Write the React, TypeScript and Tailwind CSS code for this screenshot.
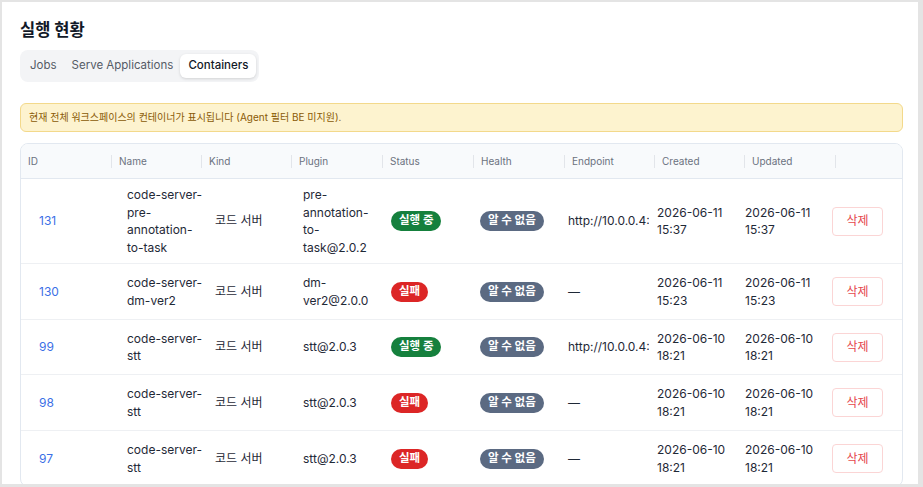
import React from 'react';

type Row = {
  id: number;
  name: string;
  plugin: string;
  status: 'running' | 'failed';
  endpoint: string;
  created: [string, string];
  updated: [string, string];
  height: string;
};

const rows: Row[] = [
  {
    id: 131,
    name: 'code-server-pre-annotation-to-task',
    plugin: 'pre-annotation-to-task@2.0.2',
    status: 'running',
    endpoint: 'http://10.0.0.4:8080',
    created: ['2026-06-11', '15:37'],
    updated: ['2026-06-11', '15:37'],
    height: 'h-[84px]',
  },
  {
    id: 130,
    name: 'code-server-dm-ver2',
    plugin: 'dm-ver2@2.0.0',
    status: 'failed',
    endpoint: '—',
    created: ['2026-06-11', '15:23'],
    updated: ['2026-06-11', '15:23'],
    height: 'h-[56px]',
  },
  {
    id: 99,
    name: 'code-server-stt',
    plugin: 'stt@2.0.3',
    status: 'running',
    endpoint: 'http://10.0.0.4:8081',
    created: ['2026-06-10', '18:21'],
    updated: ['2026-06-10', '18:21'],
    height: 'h-[55px]',
  },
  {
    id: 98,
    name: 'code-server-stt',
    plugin: 'stt@2.0.3',
    status: 'failed',
    endpoint: '—',
    created: ['2026-06-10', '18:21'],
    updated: ['2026-06-10', '18:21'],
    height: 'h-[56px]',
  },
  {
    id: 97,
    name: 'code-server-stt',
    plugin: 'stt@2.0.3',
    status: 'failed',
    endpoint: '—',
    created: ['2026-06-10', '18:21'],
    updated: ['2026-06-10', '18:21'],
    height: 'h-[56px]',
  },
];

const headers = ['ID', 'Name', 'Kind', 'Plugin', 'Status', 'Health', 'Endpoint', 'Created', 'Updated', ''];

const headCols = 'grid grid-cols-[90px_90px_90px_91px_91px_91px_90px_90px_91px_69px]';
const bodyCols = 'grid grid-cols-[10px_88px_88px_88px_88px_89px_88px_89px_88px_87px_80px]';

const StatusBadge: React.FC<{ status: Row['status'] }> = ({ status }) =>
  status === 'running' ? (
    <span className="inline-flex h-[20px] items-center rounded-full bg-[#15803d] px-[8px] text-[11.5px] font-bold text-white">
      실행 중
    </span>
  ) : (
    <span className="inline-flex h-[20px] items-center rounded-full bg-[#dc2626] px-[8px] text-[11.5px] font-bold text-white">
      실패
    </span>
  );

const App: React.FC = () => {
  const font = { fontFamily: 'Inter, "Noto Sans CJK KR", sans-serif' };

  return (
    <div className="h-[487px] w-[923px] overflow-hidden bg-[#e4e4e4] pl-[2px] pt-[2px]" style={font}>
      <div className="h-[482px] w-[916px] overflow-hidden bg-white pl-[18px] pr-[15px] pt-[14px]">
        <h1 className="text-[16.5px] font-bold leading-[28px] text-[#111827]">실행 현황</h1>

        <div className="mt-[6px] inline-flex items-center rounded-lg bg-[#f3f4f6] px-[3px] py-[4px] text-[11.5px]">
          <button className="h-[24px] pl-[7px] pr-[7px] text-[#555b66]">Jobs</button>
          <button className="h-[24px] pl-[8px] pr-[7px] text-[#555b66]">Serve Applications</button>
          <button className="h-[24px] rounded-md bg-white px-[8px] font-medium text-[#111827] shadow-[0_1px_3px_rgba(0,0,0,0.14)]">
            Containers
          </button>
        </div>

        <div className="mt-[21px] flex h-[29px] items-center rounded-md border border-[#f3d98b] bg-[#fdf3cf] px-[8px] text-[10px] text-[#8a5a06]">
          현재 전체 워크스페이스의 컨테이너가 표시됩니다 (Agent 필터 BE 미지원).
        </div>

        <div className="mt-[11px] overflow-hidden rounded-lg border border-[#e2e8f0]">
          <div className={`${headCols} h-[35px] items-center border-b border-[#e2e8f0] bg-[#f8fafc] text-[10px] text-[#6b7280]`}>
            {headers.map((h, i) => (
              <div key={i} className="flex h-full items-center">
                {i > 0 && <span className="mr-[7px] h-[13px] w-px bg-[#e2e5ea]" />}
                <span className={i === 0 ? 'pl-[7px]' : ''}>{h}</span>
              </div>
            ))}
          </div>

          {rows.map((r, idx) => (
            <div
              key={r.id}
              className={`${bodyCols} ${r.height} items-center text-[12px] leading-[17.5px] text-[#1f2937] ${idx > 0 ? 'border-t border-[#eef0f3]' : ''}`}
            >
              <div />
              <div className="pl-[8px] text-[#3b6fe6]">{r.id}</div>
              <div className="pl-[8px] pr-[4px]">{r.name}</div>
              <div className="pl-[8px]">코드 서버</div>
              <div className="pl-[8px] pr-[4px]">{r.plugin}</div>
              <div className="pl-[8px]">
                <StatusBadge status={r.status} />
              </div>
              <div className="pl-[8px]">
                <span className="inline-flex h-[20px] items-center rounded-full bg-[#5b6a82] px-[8px] text-[11.5px] font-bold text-white">
                  알 수 없음
                </span>
              </div>
              <div className="overflow-hidden whitespace-nowrap pl-[8px]">{r.endpoint}</div>
              <div className="pl-[8px]">
                <div>{r.created[0]}</div>
                <div>{r.created[1]}</div>
              </div>
              <div className="pl-[8px]">
                <div>{r.updated[0]}</div>
                <div>{r.updated[1]}</div>
              </div>
              <div className="pl-[8px]">
                <button className="flex h-[29px] w-[51px] items-center justify-center rounded-[4px] border border-[#fbd5d5] bg-white text-[12px] text-[#e5484d]">
                  삭제
                </button>
              </div>
            </div>
          ))}
        </div>
      </div>
    </div>
  );
};

export default App;
